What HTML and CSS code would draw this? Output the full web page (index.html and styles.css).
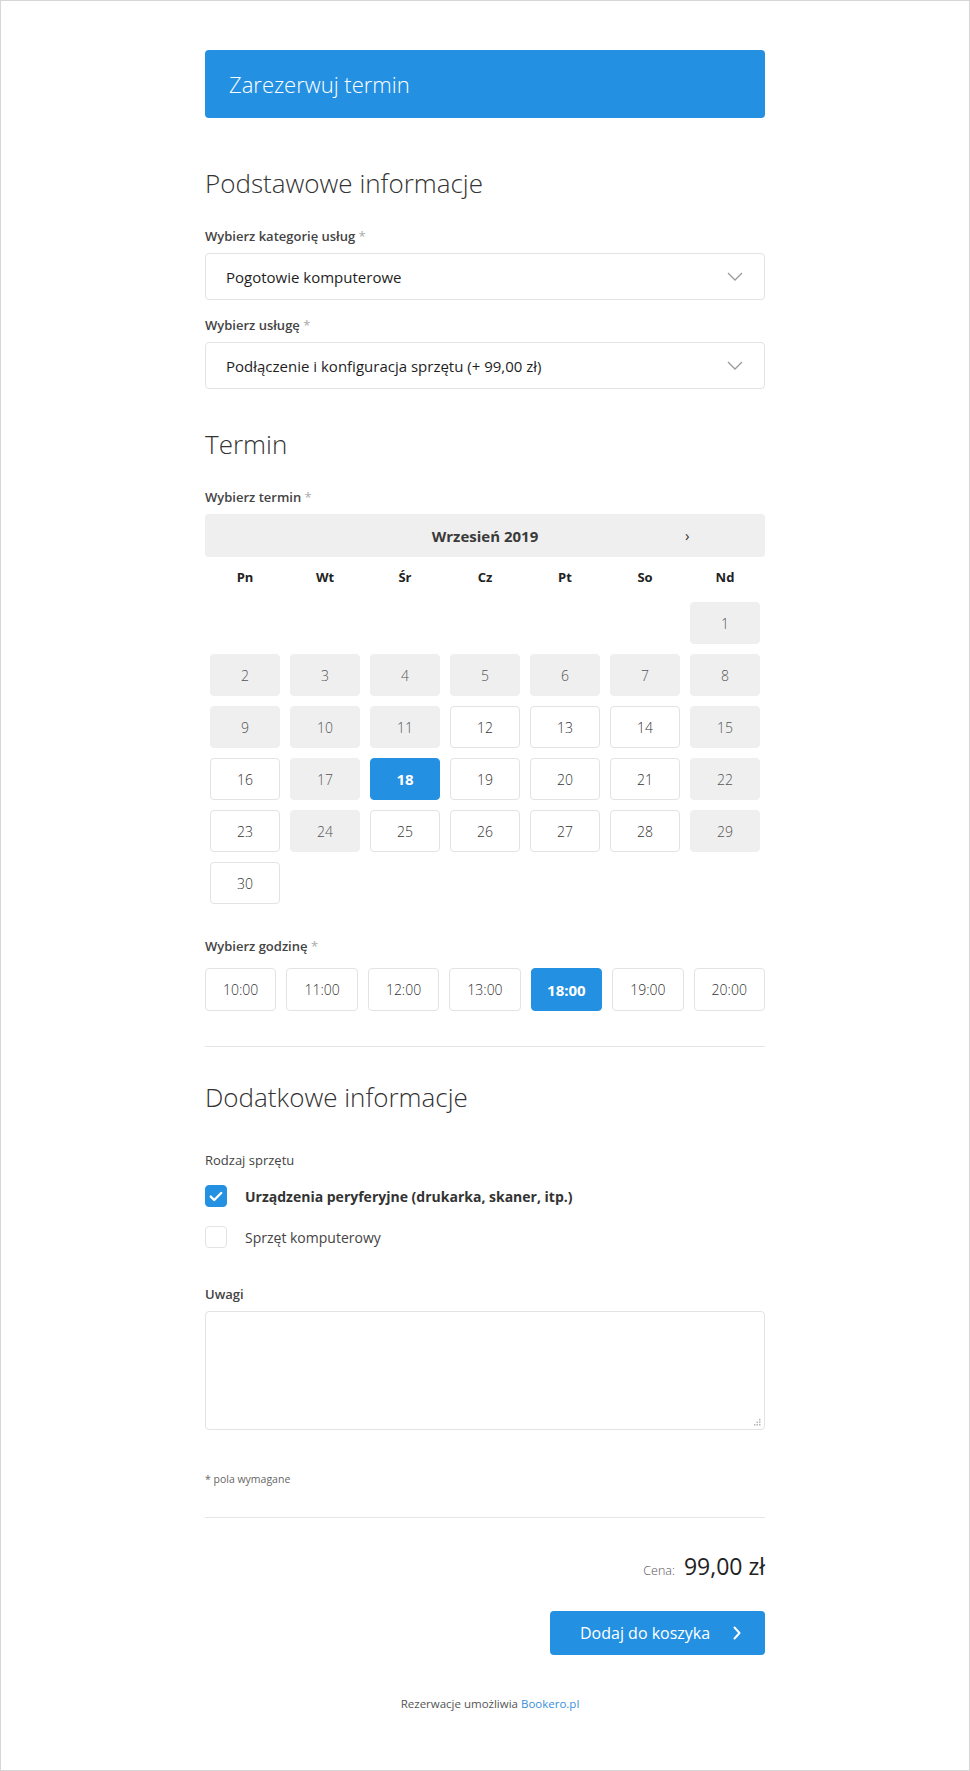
FILE: index.html
```html
<!DOCTYPE html>
<html lang="pl">
<head>
<meta charset="utf-8">
<title>Zarezerwuj termin</title>
<link rel="stylesheet" href="styles.css">
</head>
<body>
<div class="page">
  <main class="form">
    <div class="banner">Zarezerwuj termin</div>

    <h2 class="section-title first">Podstawowe informacje</h2>

    <div class="label">Wybierz kategorię usług <span class="req">*</span></div>
    <div class="select">
      <span>Pogotowie komputerowe</span>
      <svg class="chev" width="16" height="9" viewBox="0 0 16 9"><path d="M1 1 L8 8 L15 1" fill="none" stroke="#9a9a9a" stroke-width="1.3"/></svg>
    </div>

    <div class="label">Wybierz usługę <span class="req">*</span></div>
    <div class="select">
      <span>Podłączenie i konfiguracja sprzętu (+ 99,00 zł)</span>
      <svg class="chev" width="16" height="9" viewBox="0 0 16 9"><path d="M1 1 L8 8 L15 1" fill="none" stroke="#9a9a9a" stroke-width="1.3"/></svg>
    </div>

    <h2 class="section-title">Termin</h2>

    <div class="label">Wybierz termin <span class="req">*</span></div>
    <div class="cal-head">
      <span class="cal-month">Wrzesień 2019</span>
      <span class="cal-next">›</span>
    </div>
    <div class="cal-grid">
      <div class="wd">Pn</div><div class="wd">Wt</div><div class="wd">Śr</div><div class="wd">Cz</div><div class="wd">Pt</div><div class="wd">So</div><div class="wd">Nd</div>

      <div class="empty"></div><div class="empty"></div><div class="empty"></div><div class="empty"></div><div class="empty"></div><div class="empty"></div>
      <div class="day off">1</div>

      <div class="day off">2</div><div class="day off">3</div><div class="day off">4</div><div class="day off">5</div><div class="day off">6</div><div class="day off">7</div><div class="day off">8</div>

      <div class="day off">9</div><div class="day off">10</div><div class="day off">11</div><div class="day">12</div><div class="day">13</div><div class="day">14</div><div class="day off">15</div>

      <div class="day">16</div><div class="day off">17</div><div class="day sel">18</div><div class="day">19</div><div class="day">20</div><div class="day">21</div><div class="day off">22</div>

      <div class="day">23</div><div class="day off">24</div><div class="day">25</div><div class="day">26</div><div class="day">27</div><div class="day">28</div><div class="day off">29</div>

      <div class="day">30</div>
    </div>

    <div class="label hours-label">Wybierz godzinę <span class="req">*</span></div>
    <div class="hours">
      <div class="hour">10:00</div>
      <div class="hour">11:00</div>
      <div class="hour">12:00</div>
      <div class="hour">13:00</div>
      <div class="hour sel">18:00</div>
      <div class="hour">19:00</div>
      <div class="hour">20:00</div>
    </div>

    <hr class="sep sep-1">

    <h2 class="section-title extra">Dodatkowe informacje</h2>

    <div class="plain-label">Rodzaj sprzętu</div>
    <div class="check-row">
      <span class="box checked">
        <svg width="14" height="11" viewBox="0 0 14 11"><path d="M1.8 5.6 L5.2 9 L12.2 2" fill="none" stroke="#fff" stroke-width="2.4" stroke-linecap="round" stroke-linejoin="round"/></svg>
      </span>
      <span class="check-text strong">Urządzenia peryferyjne (drukarka, skaner, itp.)</span>
    </div>
    <div class="check-row">
      <span class="box"></span>
      <span class="check-text">Sprzęt komputerowy</span>
    </div>

    <div class="label notes-label">Uwagi</div>
    <div class="textarea">
      <svg class="grip" width="7" height="7" viewBox="0 0 7 7"><g fill="#b5b5b5"><rect x="5" y="0" width="1.5" height="1.5"/><rect x="2.5" y="2.5" width="1.5" height="1.5"/><rect x="5" y="2.5" width="1.5" height="1.5"/><rect x="0" y="5" width="1.5" height="1.5"/><rect x="2.5" y="5" width="1.5" height="1.5"/><rect x="5" y="5" width="1.5" height="1.5"/></g></svg>
    </div>

    <div class="required-note">* pola wymagane</div>

    <hr class="sep sep-2">

    <div class="price"><span class="price-label">Cena:</span><span class="price-value">99,00 zł</span></div>

    <div class="actions">
      <div class="btn">Dodaj do koszyka
        <svg width="8" height="14" viewBox="0 0 8 14"><path d="M1.5 1.5 L6.5 7 L1.5 12.5" fill="none" stroke="#fff" stroke-width="2" stroke-linecap="round" stroke-linejoin="round"/></svg>
      </div>
    </div>

    <div class="footer">Rezerwacje umożliwia <span class="link">Bookero.pl</span></div>
  </main>
</div>
</body>
</html>
```

FILE: styles.css
```css
* { box-sizing: border-box; }
html, body { margin: 0; padding: 0; background: #fff; }
body {
  font-family: "Open Sans", "Noto Sans", sans-serif;
  color: #333;
}
.page {
  width: 970px;
  height: 1771px;
  border: 1px solid #d6d6d6;
}
.form {
  width: 560px;
  margin: 0 auto;
  padding-top: 49px;
}
.banner {
  height: 68px;
  background: #2490e2;
  border-radius: 4px;
  color: #fff;
  font-size: 22px;
  font-weight: 300;
  line-height: 68px;
  padding-left: 24px;
}
.section-title {
  margin: 0;
  font-size: 26px;
  font-weight: 300;
  color: #333;
  line-height: 32px;
}
.section-title.first { margin-top: 49px; }
.label {
  font-size: 13px;
  font-weight: 600;
  color: #444;
  line-height: 18px;
  margin-top: 18px;
  margin-bottom: 8px;
}
.section-title + .label { margin-top: 28px; }
.req { color: #aaa; font-weight: 400; }
.select {
  height: 47px;
  border: 1px solid #e3e3e3;
  border-radius: 4px;
  display: flex;
  align-items: center;
  justify-content: space-between;
  padding: 0 21px 0 20px;
  font-size: 15px;
  color: #1e1e1e;
}
.select + .label { margin-top: 16px; }
.section-title:not(.first) { margin-top: 39px; }
.cal-head {
  height: 43px;
  background: #efefef;
  border-radius: 4px;
  display: flex;
  align-items: center;
  justify-content: center;
  position: relative;
}
.cal-month { font-size: 15px; font-weight: 700; color: #3a3a3a; }
.cal-next {
  position: absolute;
  left: 480px;
  top: 11px;
  font-size: 15px;
  color: #333;
}
.cal-grid {
  display: grid;
  grid-template-columns: repeat(7, 1fr);
  column-gap: 10px;
  row-gap: 10px;
  padding: 0 5px;
  margin-top: 10px;
}
.wd {
  text-align: center;
  font-size: 13px;
  font-weight: 700;
  color: #222;
  line-height: 20px;
  margin-bottom: 5px;
}
.day {
  height: 42px;
  border: 1px solid #e3e3e3;
  border-radius: 4px;
  display: flex;
  align-items: center;
  justify-content: center;
  font-size: 14px;
  font-weight: 300;
  color: #333;
  background: #fff;
}
.day.off { background: #efefef; border-color: #efefef; color: #555; }
.day.sel { background: #2490e2; border-color: #2490e2; color: #fff; font-weight: 700; font-size: 15px; }
.hours-label { margin-top: 33px; margin-bottom: 13px; }
.hours { display: flex; gap: 10px; }
.hour {
  flex: 1;
  height: 43px;
  border: 1px solid #e3e3e3;
  border-radius: 4px;
  display: flex;
  align-items: center;
  justify-content: center;
  font-size: 14px;
  font-weight: 300;
  color: #333;
}
.hour.sel { background: #2490e2; border-color: #2490e2; color: #fff; font-weight: 700; font-size: 15px; }
.sep { border: 0; border-top: 1px solid #e5e5e5; margin: 0; }
.sep-1 { margin-top: 35px; }
.section-title.extra { margin-top: 34px; }
.plain-label {
  font-size: 13px;
  color: #444;
  line-height: 18px;
  margin-top: 38px;
}
.check-row {
  display: flex;
  align-items: center;
  height: 22px;
  margin-top: 16px;
}
.check-row + .check-row { margin-top: 19px; }
.box {
  width: 22px;
  height: 22px;
  border: 1px solid #e3e3e3;
  border-radius: 4px;
  display: flex;
  align-items: center;
  justify-content: center;
  margin-right: 18px;
  flex: none;
}
.box.checked { background: #2490e2; border-color: #2490e2; }
.check-text { font-size: 14px; color: #444; }
.check-text.strong { font-weight: 700; color: #333; font-size: 14px; }
.notes-label { margin-top: 37px; margin-bottom: 8px; }
.textarea {
  height: 119px;
  border: 1px solid #e3e3e3;
  border-radius: 4px;
  position: relative;
}
.grip { position: absolute; right: 3px; bottom: 3px; }
.required-note {
  font-size: 10.5px;
  color: #666;
  margin-top: 42px;
  line-height: 14px;
}
.sep-2 { margin-top: 31px; }
.price {
  display: flex;
  justify-content: flex-end;
  align-items: baseline;
  margin-top: 33px;
  line-height: 30px;
}
.price-label { font-size: 12.5px; color: #555; font-weight: 300; margin-right: 9px; }
.price-value { font-size: 23px; color: #222; }
.actions { display: flex; justify-content: flex-end; margin-top: 25px; }
.btn {
  width: 215px;
  height: 44px;
  background: #2490e2;
  border-radius: 4px;
  color: #fff;
  font-size: 16px;
  display: flex;
  align-items: center;
  padding-left: 30px;
  gap: 23px;
}
.footer {
  text-align: center;
  font-size: 11.5px;
  color: #555;
  margin-top: 41px;
  padding-left: 10px;
}
.link { color: #3a8fd9; }
```
